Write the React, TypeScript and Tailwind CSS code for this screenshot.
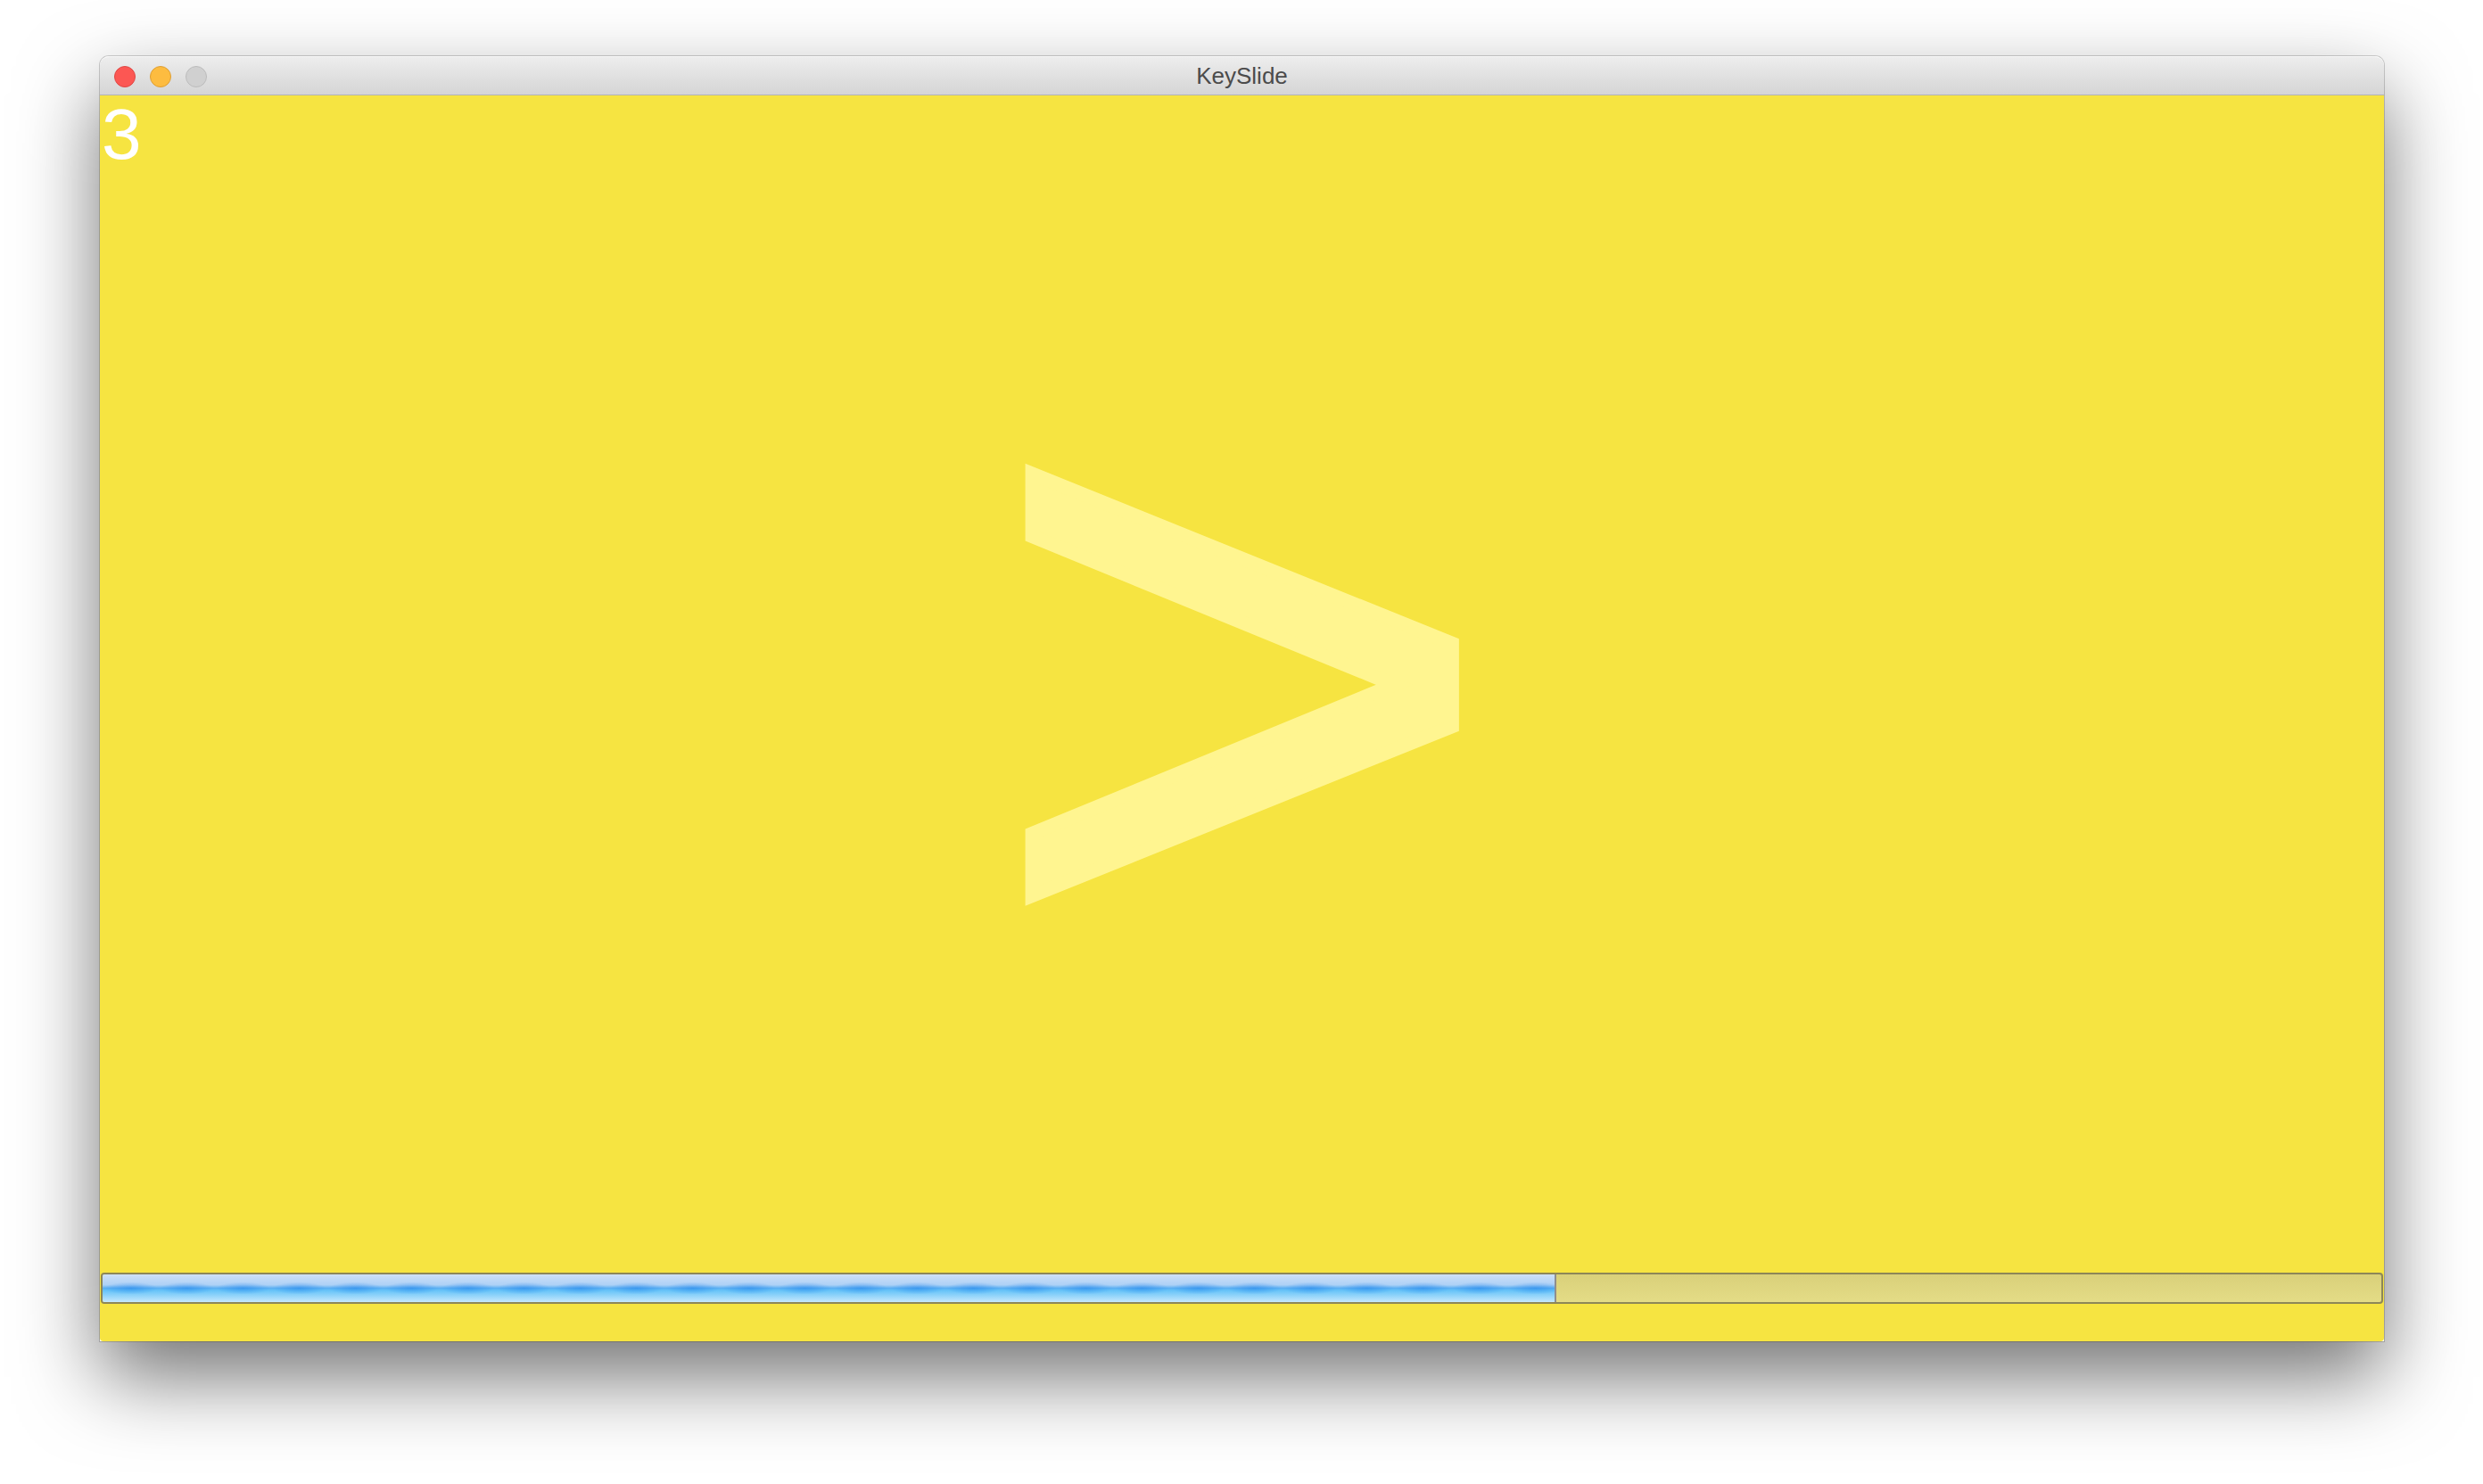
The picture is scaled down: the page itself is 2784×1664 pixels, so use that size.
import { useState } from "react";

export default function App() {
  const [slide] = useState(3);
  const [progress] = useState(63.8);

  return (
    <div className="w-[2784px] h-[1664px] bg-white pl-[112px] pt-[63px] overflow-hidden font-['Liberation_Sans',Arial,sans-serif]">
      <div className="w-[2561px] h-[1441px] flex flex-col rounded-t-[10px] shadow-[0_0_0_1px_rgba(0,0,0,0.18),0_40px_90px_rgba(0,0,0,0.55)]">
        {/* Title bar */}
        <div className="h-[44px] shrink-0 relative flex items-center justify-center rounded-t-[10px] bg-[linear-gradient(to_bottom,#ededed,#d5d5d5)] border-t border-[#f8f8f8] border-b border-b-[#b3b3b3]">
          <div className="absolute left-[16px] top-[10px] flex gap-[16px]">
            <span className="w-[24px] h-[24px] rounded-full bg-[#fc5753] border border-[#df4744]" />
            <span className="w-[24px] h-[24px] rounded-full bg-[#fdbc40] border border-[#de9f34]" />
            <span className="w-[24px] h-[24px] rounded-full bg-[#d0d0d0] border border-[#bcbcbc]" />
          </div>
          <span className="text-[26px] text-[#4b4b4b] leading-none">KeySlide</span>
        </div>

        {/* Slide */}
        <div className="flex-1 flex flex-col bg-[#f6e441] rounded-b-[4px]">
          <div className="h-[80px] pl-[2px] pt-[4px] text-white text-[80px] leading-none">{slide}</div>
          <div className="flex-1 flex items-center justify-center pb-[110px]">
            <span className="block text-[#fff590] text-[968px] leading-none select-none scale-y-[0.962] [-webkit-text-stroke:16px_#fff590]">&gt;</span>
          </div>
          {/* Progress */}
          <div className="mx-[1px] mb-[42px] h-[35px] rounded-[4px] border-2 border-[#8d8757] bg-[linear-gradient(to_bottom,#d9d07a,#e4dc86)] overflow-hidden flex">
            <div
              className="h-full border-r-2 border-[#8e8e8e] bg-[image:radial-gradient(ellipse_30px_7px_at_center,rgba(30,130,235,0.5),rgba(30,130,235,0)),linear-gradient(to_bottom,#cfe0f7_0%,#aed1f6_38%,#5cb0f2_50%,#66c3f8_58%,#c6e8fc_100%)] [background-size:63px_100%,100%_100%]"
              style={{ width: `${progress}%` }}
            />
          </div>
        </div>
      </div>
    </div>
  );
}
